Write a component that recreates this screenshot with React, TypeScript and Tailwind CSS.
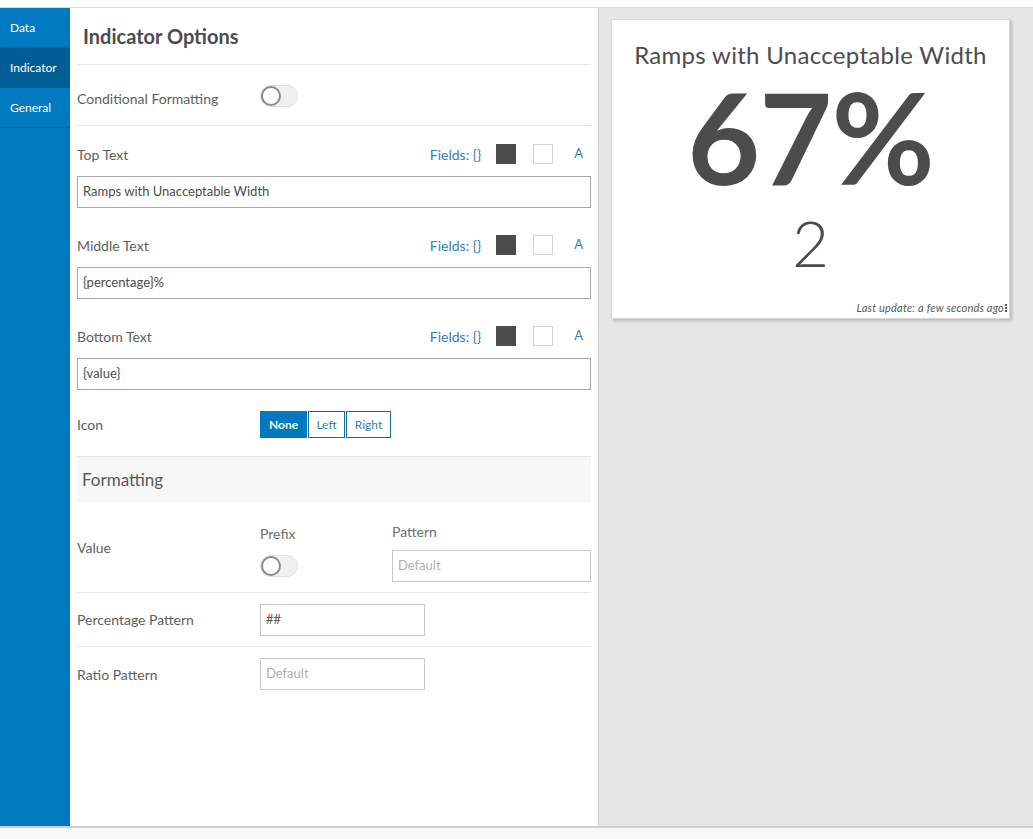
import React from 'react';

const font = { fontFamily: 'Lato, "Noto Sans", sans-serif' };

const Toggle = () => (
  <div className="relative w-[38px] h-[22px] rounded-full bg-[#f0f0f0] border border-[#e0e0e0]">
    <div className="absolute left-0 top-[0px] w-[20px] h-[20px] rounded-full bg-white border-2 border-[#8a8a8a]" />
  </div>
);

const TextRow = ({ label, value }: { label: string; value: string }) => (
  <div className="h-[91px] pt-[17px]">
    <div className="flex items-center h-[22px]">
      <span className="text-[14px] text-[#5e5e5e] flex-1">{label}</span>
      <span className="text-[14px] text-[#3580b8] mr-[15px]">Fields: {'{}'}</span>
      <div className="w-[20px] h-[20px] bg-[#4c4c4c] mr-[17px]" />
      <div className="w-[20px] h-[20px] bg-white border border-[#d4d4d4] mr-[21px]" />
      <span className="text-[13px] text-[#3580b8] mr-[8px]">A</span>
    </div>
    <div className="mt-[11px] h-[32px] border border-[#a8a8a8] flex items-center px-[5px] text-[13px] text-[#4c4c4c]">
      {value}
    </div>
  </div>
);

export default function App() {
  return (
    <div className="w-[1033px] h-[839px] bg-white flex flex-col overflow-hidden" style={font}>
      <div className="h-[8px] border-b border-[#dcdcdc] shrink-0" />
      <div className="flex h-[820px] border-b-2 border-[#cfcfcf]">
        {/* sidebar */}
        <div className="w-[70px] bg-[#0079c1] flex flex-col text-white text-[12px]">
          <div className="h-[40px] flex items-center px-[10px] pt-[1px] border-b border-[#0068a8]">Data</div>
          <div className="h-[40px] flex items-center px-[10px] pt-[1px] bg-[#005e95] border-b border-[#00548a]">Indicator</div>
          <div className="h-[40px] flex items-center px-[10px] pt-[1px] border-b border-[#005e95]">General</div>
        </div>

        {/* form */}
        <div className="w-[529px] bg-white border-r border-[#d4d4d4] pl-[7px] pr-[7px]">
          <div className="h-[57px] flex items-center pl-[6px] border-b border-[#e6e6e6] text-[20px] font-bold text-[#4c4c4c]">
            Indicator Options
          </div>
          <div className="h-[61px] flex items-center pt-[6px] border-b border-[#e6e6e6]">
            <span className="text-[14px] text-[#5e5e5e] w-[183px]">Conditional Formatting</span>
            <div className="-mt-[4px]">
              <Toggle />
            </div>
          </div>
          <TextRow label="Top Text" value="Ramps with Unacceptable Width" />
          <TextRow label="Middle Text" value="{percentage}%" />
          <TextRow label="Bottom Text" value="{value}" />
          <div className="h-[58px] flex items-center pb-[6px] border-b border-[#e6e6e6]">
            <span className="text-[14px] text-[#5e5e5e] w-[183px]">Icon</span>
            <div className="flex gap-[1px] text-[12px]">
              <div className="h-[27px] w-[47px] bg-[#0079c1] text-white font-bold flex items-center justify-center border border-[#0079c1]">None</div>
              <div className="h-[27px] w-[37px] border border-[#136a9e] text-[#3580b8] flex items-center justify-center">Left</div>
              <div className="h-[27px] w-[45px] border border-[#136a9e] text-[#3580b8] flex items-center justify-center">Right</div>
            </div>
          </div>
          <div className="h-[45px] bg-[#f7f7f7] flex items-center pl-[5px] text-[17px] text-[#595959]">Formatting</div>
          <div className="h-[91px] flex items-center pt-[1px] border-b border-[#e6e6e6]">
            <span className="text-[14px] text-[#5e5e5e] w-[183px]">Value</span>
            <div className="flex flex-col w-[132px] pt-[4px]">
              <span className="text-[14px] text-[#6e6e6e] mb-[11px]">Prefix</span>
              <Toggle />
            </div>
            <div className="flex flex-col flex-1 pt-[8px]">
              <span className="text-[14px] text-[#6e6e6e] mb-[8px]">Pattern</span>
              <div className="h-[32px] border border-[#c8c8c8] flex items-center px-[5px] text-[13px] text-[#b0b0b0]">Default</div>
            </div>
          </div>
          <div className="h-[54px] flex items-center border-b border-[#e6e6e6]">
            <span className="text-[14px] text-[#5e5e5e] w-[183px]">Percentage Pattern</span>
            <div className="w-[165px] h-[32px] border border-[#c8c8c8] flex items-center px-[5px] text-[13px] text-[#595959]">##</div>
          </div>
          <div className="h-[54px] flex items-center">
            <span className="text-[14px] text-[#5e5e5e] w-[183px]">Ratio Pattern</span>
            <div className="w-[165px] h-[32px] border border-[#c8c8c8] flex items-center px-[5px] text-[13px] text-[#b0b0b0]">Default</div>
          </div>
        </div>

        {/* preview */}
        <div className="flex-1 bg-[#e6e6e6] pl-[12px] pt-[11px]">
          <div className="relative w-[399px] h-[300px] bg-white border border-[#d8d8d8] shadow-[2px_2px_3px_rgba(0,0,0,0.2)] flex flex-col items-center text-[#4c4c4c]">
            <div className="mt-[20px] text-[24px] leading-[30px] tracking-[0.3px]">Ramps with Unacceptable Width</div>
            <div className="mt-[4px] text-[126px] leading-none font-bold tracking-[-1px]">67%</div>
            <div className="mt-[11px] text-[64px] leading-none font-light">2</div>
            <div className="absolute right-[2px] bottom-[2px] text-[11px] italic tracking-[0.2px] text-[#595959] flex items-center">
              Last update: a few seconds ago
              <span className="ml-[1px] flex flex-col gap-[1px]">
                <span className="w-[2px] h-[2px] bg-[#595959]" />
                <span className="w-[2px] h-[2px] bg-[#595959]" />
                <span className="w-[2px] h-[2px] bg-[#595959]" />
              </span>
            </div>
          </div>
        </div>
      </div>
      <div className="flex-1 bg-[#f8f8f8]" />
    </div>
  );
}
